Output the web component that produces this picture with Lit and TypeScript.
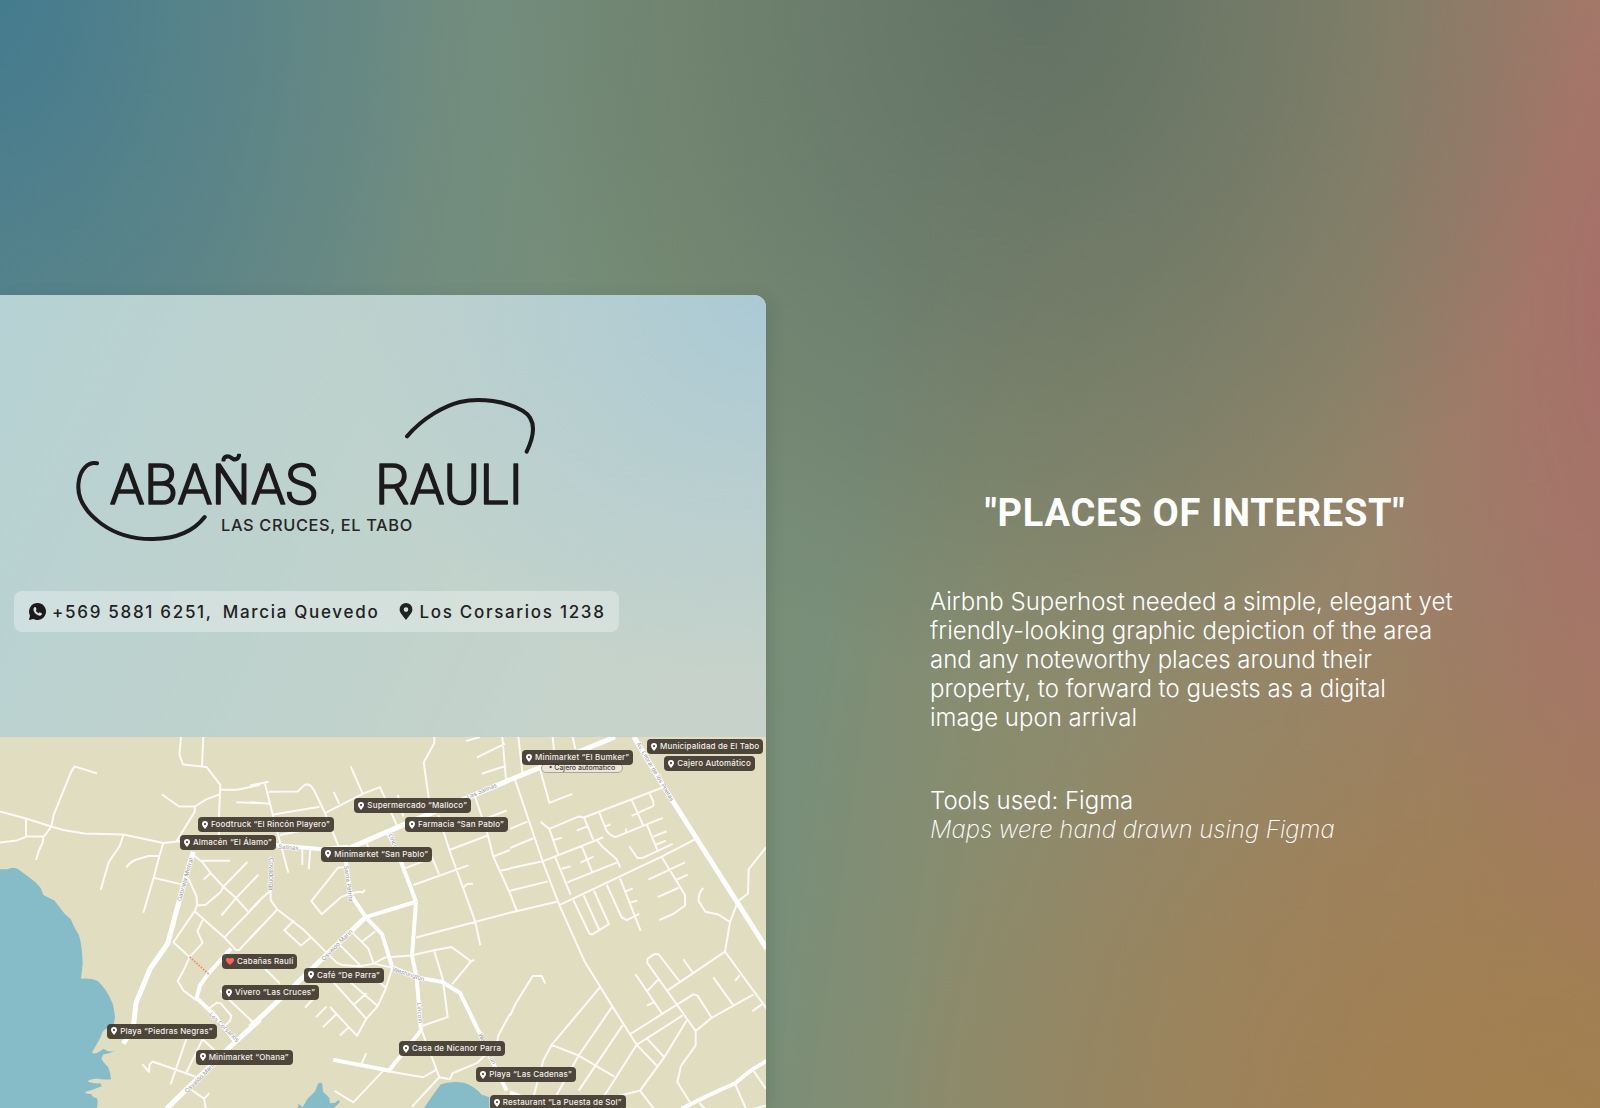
import { LitElement, html, svg, css } from "lit";
import { customElement } from "lit/decorators.js";

type Shape = [x: number, d: string];
type Label = [x: number, y: number, text: string, icon?: string];
type Street = [x: number, y: number, angle: number, text: string];

/* Map space: 2298 x 1110 units. Columns start at 0, 750 and 1530. */
const THIN: Shape[] = [
  [0, `M543 22L538 74L549 104L620 112L661 165L657 260V330 M610 22L606 108
    M661 180H712L780 165 M709 217L780 220 M720 268H780
    M661 193L620 208L585 230L537 230L486 194 M585 230L584 246L530 333
    M291 131L224 110L213 127L161 255L154 290L130 322L128 338L117 361L108 390
    M0 245L78 266L154 290L190 300L253 311L370 314L490 339L545 333
    M78 266V320H130 M0 338L50 332L78 320
    M370 316L359 348L326 397L302 480
    M490 339L478 378L461 443L430 548 M478 378H445L405 390Q388 398 379 412 M461 443L545 463
    M580 375L607 396L631 428L670 470L708 504L745 545 M607 392H690 M611 448L631 430
    M742 396L670 470L662 486L617 524L591 526L590 500L565 445
    M775 434L708 504L664 556 M591 526L584 543L520 636L569 680L608 638L592 603L608 570
    M584 543L673 622L708 659H718L780 592 M673 622L780 512
    M569 680L552 718L533 752L550 780L590 810
    M625 836L650 817L662 819L694 856L690 872L675 885 M660 780L700 820L760 876
    M560 922L512 1061 M608 926L558 1028 M608 926L660 975
    M427 1001L447 1024L449 1001L458 993L600 1043 M570 1075L612 1104L618 1134 M628 1088L612 1104 M500 1134L520 1122`],
  [750, `M0 167L56 156 M45 162L70 262L115 428 M0 217L60 222 M56 186L143 185L163 166Q174 160 184 170L194 185L225 250L270 360
    M70 254L209 231 M90 315L207 292 M251 186L268 222 M302 110L338 192 M225 250L338 192L390 172L440 285
    M443 195L460 260 M553 22V40L521 98L540 230 M648 34L690 22 M681 83L765 42 M695 132L768 108 M757 22L768 150
    M675 200L712 310L730 380L780 490 M620 300L770 242 M730 380L780 360 M748 423L780 416
    M565 255L598 360L675 572L691 645 M598 360L715 316 M545 380L567 432 M490 465L655 406 M465 415L540 385
    M640 472L652 462L669 461 M498 622L780 548
    M157 355V405 M181 358L176 418 M350 340L365 375
    M290 411L264 413L184 513L215 552L272 502L300 490L329 485Q343 490 343 478
    M0 540L27 512L60 483 M0 625L82 538 M62 380V510L82 538L160 598L260 697L276 704L330 708L371 700L404 682L484 676L552 660L604 650L663 693L606 762
    M673 688L655 700 M132 571L103 600L153 646L182 622 M552 660L578 745L593 860L518 886
    M305 605L355 655L371 700 M337 634L376 603 M265 640L330 705 M371 700L425 712 M427 712L408 773L383 827L349 865L321 916L240 830
    M250 755L349 865 M300 755L383 827 M408 773L370 740 M312 822L350 788 M0 690L40 710L90 760
    M165 832L190 805 M198 860L230 828 M219 890L260 850 M270 915L296 890 M0 868L10 880
    M335 998L349 968 M254 1081L310 1115L400 1020 M400 1020L520 1040L558 1018 M515 900L568 1040L600 1046L608 1028L682 997L740 940L745 915L780 850
    M568 1040L486 1128`],
  [1530, `M25 22L38 135 M128 22L132 62 M188 22L196 58 M90 118L118 219L187 192 M15 150L100 400L148 525L223 692L307 828L380 943L440 1005
    M0 297L52 275 M0 354L70 325 M0 415L98 394L260 330L280 322 M0 482L114 454 M0 548L140 515 M0 490L20 542
    M92 276L118 297L205 260L222 263L458 173 M118 297L145 375 M130 330L157 323 M222 263L250 330 M200 302L230 290
    M268 248L290 303Q305 322 318 321L458 264 M285 290L302 283 M348 296V305 M365 210L399 285 M417 188L430 215V228L365 258
    M411 285L442 360 M430 320L470 304 M436 345L468 332 M358 349L382 384L400 383L488 342 M260 330L275 348L320 388L331 413
    M215 348L246 425 M211 398L251 380 M172 457L320 398 M136 382L182 494 M155 416L182 409
    M148 525L455 380L555 328 M455 380L525 495V526L492 550L448 570 M415 449L525 397 M500 449L533 434 M443 501L506 473
    M190 510L238 610L246 613L297 582L252 482 M221 496L267 598 M290 464L335 562L350 570L388 551 M330 445L392 602 M345 485L368 475 M360 518L382 511
    M580 474Q565 487 566 513L586 545L625 553L660 576 M768 352L716 418L714 490L684 513L660 576L645 664L770 835
    M645 664L473 780 M689 735L675 752 M520 687L549 728 M510 755L446 672L434 671L412 686V698L557 902
    M376 731L455 848 M446 746L412 782 M432 815L411 826 M610 741L670 825 M756 822L727 842
    M362 910L550 792L562 795L605 862 M557 902L605 862L731 792 M380 943L518 855
    M412 925L463 980 M530 870L463 980L390 1080L436 1140 M557 902V945L513 1006L502 1054L540 1115
    M269 772L125 943L100 990L70 1100 M307 828L206 975L130 1110 M338 884L206 1080 M125 943L206 975L313 1038 M380 943L275 1108 M275 1108L390 1080
    M0 856L18 818L68 737H95L106 760 M675 1060L708 1134 M730 1020L768 1075 M568 1117L585 1134 M768 1125L730 1134`],
];
const MEDIUM: Shape[] = [
  [0, "M693 655L625 730L600 765L590 803L640 850L706 934"],
  [750, "M75 345L215 358L295 350 M290 350L288 395L300 490L347 561L396 612L408 650L427 711L505 742L577 755L630 788L690 910L735 1010L770 1080 M347 561L498 515 M498 515L486 676L500 742L513 900L417 1020L250 988 M415 310L440 360L498 515"],
  [1530, "M515 1134L600 1092L675 1058L725 1018L770 991 M0 1085L60 1110"],
];
const THICK: Shape[] = [
  [0, "M580 365L560 430L503 640L450 716L408 818L400 890L370 940 M500 1134L706 934L780 868"],
  [750, "M0 890L110 788L347 561 M290 358L460 285L780 150"],
  [1530, "M0 150L315 22 M372 22L470 185L770 655"],
];

const WATER: Shape[] = [
  [0, `M0 418L22 418Q40 407 58 420L105 455L122 474L130 495L163 511L195 552L213 568L220 585L236 614Q246 640 248 700L243 745
    Q275 743 293 752Q320 775 339 822L345 858L340 895L320 895Q306 900 303 918L276 966Q284 974 300 962L311 955Q325 968 345 960Q330 970 310 972L304 985
    Q312 1000 325 1010Q332 1028 333 1046Q310 1048 290 1044Q270 1046 263 1052Q276 1060 302 1058L305 1067Q280 1078 254 1084Q260 1092 274 1090Q275 1099 290 1102Q296 1115 290 1134H0Z`],
  [750, `M142 1134L146 1120L158 1130L172 1105L195 1083L204 1060Q213 1050 217 1062L219 1083L238 1102L240 1118L256 1116L265 1108L270 1114L250 1134Z
    M521 1134L545 1098L572 1062Q600 1050 645 1057Q675 1068 695 1092L718 1100V1134Z`],
];

const STREETS: Street[] = [
  [543, 492, -74, "Gabriela Mistral"],
  [626, 832, 44, "Los Corsarios"],
  [562, 1066, -45, "Osvaldo Marín"],
  [972, 670, -45, "Osvaldo Marín"],
  [1404, 186, -23, "Las Salinas"],
  [800, 332, 4, "Las Salinas"],
  [808, 362, 90, "Covadonga"],
  [1032, 386, 82, "Santa Petrita"],
  [1166, 292, 70, "Lincoln"],
  [1176, 700, 18, "Washington"],
  [1251, 796, 86, "Lincoln"],
  [1435, 890, 65, "Washington"],
  [1908, 20, 59, "Av. Litoral de los Poetas"],
];

const LABELS: Label[] = [
  [1566, 39, "Minimarket “El Bumker”"],
  [1941, 7, "Municipalidad de El Tabo"],
  [1993, 58, "Cajero Automático"],
  [1063, 184, "Supermercado “Malloco”"],
  [594, 240, "Foodtruck “El Rincón Playero”"],
  [1215, 240, "Farmacia “San Pablo”"],
  [540, 294, "Almacén “El Álamo”"],
  [964, 329, "Minimarket “San Pablo”"],
  [666, 650, "Cabañas Raulí", "heart"],
  [912, 691, "Café “De Parra”"],
  [666, 742, "Vivero “Las Cruces”"],
  [322, 858, "Playa “Piedras Negras”"],
  [1197, 911, "Casa de Nicanor Parra"],
  [587, 936, "Minimarket “Ohana”"],
  [1429, 988, "Playa “Las Cadenas”"],
  [1469, 1072, "Restaurant “La Puesta de Sol”"],
];

const pin = (cls: string) => html`<svg class=${cls} viewBox="0 0 12 16" aria-hidden="true">
  <path fill="currentColor" fill-rule="evenodd" d="M6 0a6 6 0 0 0-6 6c0 3 2.500 5.200 6 10 3.500-4.800 6-7 6-10a6 6 0 0 0-6-6zm0 4a2.200 2.200 0 1 1 0 4.400A2.200 2.200 0 0 1 6 4z"/>
</svg>`;
const heart = html`<svg class="label-icon heart" viewBox="0 0 16 14" aria-hidden="true">
  <path fill="currentColor" d="M8 14C3 10 0 7.500 0 4.200A4.200 4.200 0 0 1 8 2a4.200 4.200 0 0 1 8 2.200C16 7.500 13 10 8 14z"/>
</svg>`;

@customElement("area-map")
export class AreaMap extends LitElement {
  static styles = css`
    :host { display: block; position: relative; overflow: hidden; aspect-ratio: 2298 / 1110; background: #e1ddc0; }
    .roads { display: block; width: 100%; height: 100%; }
    .water { fill: #85bcc8; }
    .road { fill: none; stroke: #fff; stroke-linejoin: round; }
    .thin { stroke-width: 6; stroke-opacity: 0.85; }
    .medium { stroke-width: 12; }
    .thick { stroke-width: 15; }
    .path { fill: none; stroke: #f0897c; stroke-width: 5; stroke-dasharray: 5 4; }
    .street { font: 400 18px Inter, sans-serif; fill: #96969a; stroke: #fff; stroke-width: 3; paint-order: stroke; }
    .label {
      position: absolute; display: flex; align-items: center; gap: 3px;
      height: 15px; padding: 0 4px; border-radius: 4px; box-sizing: border-box;
      background: rgb(56 48 38 / 0.88); color: #f3f0ea;
      font: 500 8px/15px Inter, sans-serif; letter-spacing: 0.02em; white-space: nowrap;
    }
    .label-icon { width: 6px; height: 8px; color: #fff; }
    .heart { width: 8px; height: 7px; color: #fb625f; }
    .note {
      position: absolute; height: 10px; padding: 0 7px; border: 1px solid #a9a698; border-radius: 5px; box-sizing: border-box;
      background: #ebe7d8; color: #49443d; font: 500 7px/8px Inter, sans-serif; white-space: nowrap;
    }
  `;

  private roads(list: Shape[], cls: string) {
    return list.map(([x, d]) => svg`<path class=${cls} transform="translate(${x} -22)" d=${d} />`);
  }

  render() {
    return html`
      <svg class="roads" viewBox="0 0 2298 1110" preserveAspectRatio="none" aria-hidden="true">
        ${this.roads(WATER, "water")}
        ${this.roads(THIN, "road thin")}
        ${this.roads(MEDIUM, "road medium")}
        ${this.roads(THICK, "road thick")}
        <path class="path" d="M569 658L626 709" />
        ${STREETS.map(([x, y, a, t]) => svg`<text class="street" transform="translate(${x} ${y}) rotate(${a})">${t}</text>`)}
      </svg>
      <span class="note" style="left:${162200 / 2298}%;top:${7800 / 1110}%">• Cajero automático</span>
      ${LABELS.map(([x, y, text, icon]) => html`
        <span class="label" style="left:${(x * 100) / 2298}%;top:${(y * 100) / 1110}%">
          ${icon ? heart : pin("label-icon")}<span>${text}</span>
        </span>`)}
    `;
  }
}

@customElement("app-root")
export class AppRoot extends LitElement {
  static styles = css`
    :host { display: block; }
    .page {
      box-sizing: border-box; min-height: 100vh; overflow: hidden;
      display: grid; grid-template-columns: 766fr 834fr;
      padding-top: 295px;
      font-family: Inter, sans-serif;
      background:
        radial-gradient(ellipse 28% 62% at 0% 0%, #447b8e 0%, rgb(68 123 142 / 0.55) 38%, transparent 100%),
        radial-gradient(ellipse 34% 62% at 65% 0%, #627264 0%, rgb(99 114 101 / 0.6) 45%, transparent 100%),
        radial-gradient(ellipse 17% 62% at 102% 28%, #a86e69 0%, rgb(168 110 105 / 0.5) 45%, transparent 100%),
        radial-gradient(ellipse 40% 50% at 96% 102%, #a3804e 0%, rgb(163 128 78 / 0.6) 45%, transparent 100%),
        linear-gradient(98deg, #648889 0%, #708c80 24%, #788e75 40%, #7a8f79 52%, #898c6e 62%, #93876a 76%, #a27b66 100%);
    }
    .card {
      display: flex; flex-direction: column;
      overflow: hidden; border-radius: 0 12px 0 0;
      box-shadow: 4px 4px 16px rgb(40 60 50 / 0.16);
    }
    area-map { flex: 1 0 auto; }
    .intro {
      padding: 85px 0 105px 14px; display: flex; flex-direction: column; align-items: flex-start; gap: 31px;
      background:
        radial-gradient(ellipse 55% 90% at 100% 0%, #abcad5 0%, rgb(171 202 213 / 0.6) 40%, transparent 100%),
        linear-gradient(115deg, #b6d2d4 0%, #bed2cd 40%, #c7d3ca 90%);
    }
    .logo { display: block; width: 500px; height: 180px; margin-left: 46px; }
    .swash { fill: none; stroke: #1c1a1b; stroke-width: 12; stroke-linecap: round; stroke-linejoin: round; }
    .name { font: 300 164px Roboto, sans-serif; fill: #1c1a1b; stroke: #1c1a1b; stroke-width: 5; stroke-linejoin: round; }
    .town { font: 500 49px Inter, sans-serif; fill: #262626; letter-spacing: 2px; }
    .contact {
      display: flex; align-items: center; gap: 20px; box-sizing: border-box; height: 41px; padding: 0 13px 0 15px; border-radius: 8px;
      background: rgb(255 255 255 / 0.32);
      font-style: normal; font-weight: 500; font-size: 17px; line-height: 24px; letter-spacing: 0.1em;
    }
    .entry { display: flex; align-items: center; gap: 6px; color: #222; text-decoration: none; }
    .person { margin-left: 4px; }
    .phone { width: 17px; height: 17px; }
    .place { width: 14px; height: 17px; }
    .about { justify-self: center; width: 530px; margin-left: 24px; padding-top: 192px; color: #fff; }
    .title {
      margin: 0 0 48px; text-align: center;
      font: 700 38px/52px Roboto, sans-serif; letter-spacing: 0.02em;
    }
    .text { margin: 0 0 54px; font-weight: 300; font-size: 24px; line-height: 29px; }
    .text em { font-weight: 200; }
  `;

  render() {
    return html`
      <main class="page">
        <article class="card">
          <div class="intro">
            <svg class="logo" viewBox="0 0 1500 540" role="img" aria-label="Cabañas Raulí, Las Cruces, El Tabo">
              <path class="swash" d="M111 250C82 244 62 272 57 300C47 350 75 395 125 432C175 468 235 478 280 477C350 476 400 455 434 411" />
              <path class="swash" d="M1041 169C1090 112 1155 77 1200 66C1260 52 1340 64 1388 92C1432 118 1424 165 1400 215" />
              <text class="name" x="150" y="371">ABAÑAS</text>
              <text class="name" x="946" y="371">RAULI</text>
              <text class="town" x="483" y="454">LAS CRUCES, EL TABO</text>
            </svg>
            <address class="contact">
              <a class="entry" href="tel:+56958816251">
                <svg class="phone" viewBox="0 0 17 17" aria-hidden="true">
                  <path fill="#1c1a1b" d="M8.500 0a8.500 8.500 0 1 1-4 16L0 17l1-4.500A8.500 8.500 0 0 1 8.500 0z"/>
                  <path fill="#d3e2de" d="M5.400 4.300c.5-.5 1-.5 1.300 0l.8 1.700c.1.400 0 .7-.7 1.400.7 1.400 1.600 2.200 2.900 2.800.6-.6.9-1 1.300-.8l1.700.9c.4.300.3.900-.1 1.500-.8 1-2.200 1.100-3.900.3C6.500 11.100 5 9.200 4.500 7.300c-.2-1.300.2-2.300.9-3z"/>
                </svg>
                <span>+569 5881 6251,</span><span class="person">Marcia Quevedo</span>
              </a>
              <span class="entry">${pin("place")}<span>Los Corsarios 1238</span></span>
            </address>
          </div>
          <area-map></area-map>
        </article>
        <section class="about">
          <h1 class="title">"PLACES OF INTEREST"</h1>
          <p class="text">Airbnb Superhost needed a simple, elegant yet friendly-looking graphic depiction of the area and any noteworthy places around their property, to forward to guests as a digital image upon arrival</p>
          <p class="text">Tools used: Figma<br /><em>Maps were hand drawn using Figma</em></p>
        </section>
      </main>
    `;
  }
}
